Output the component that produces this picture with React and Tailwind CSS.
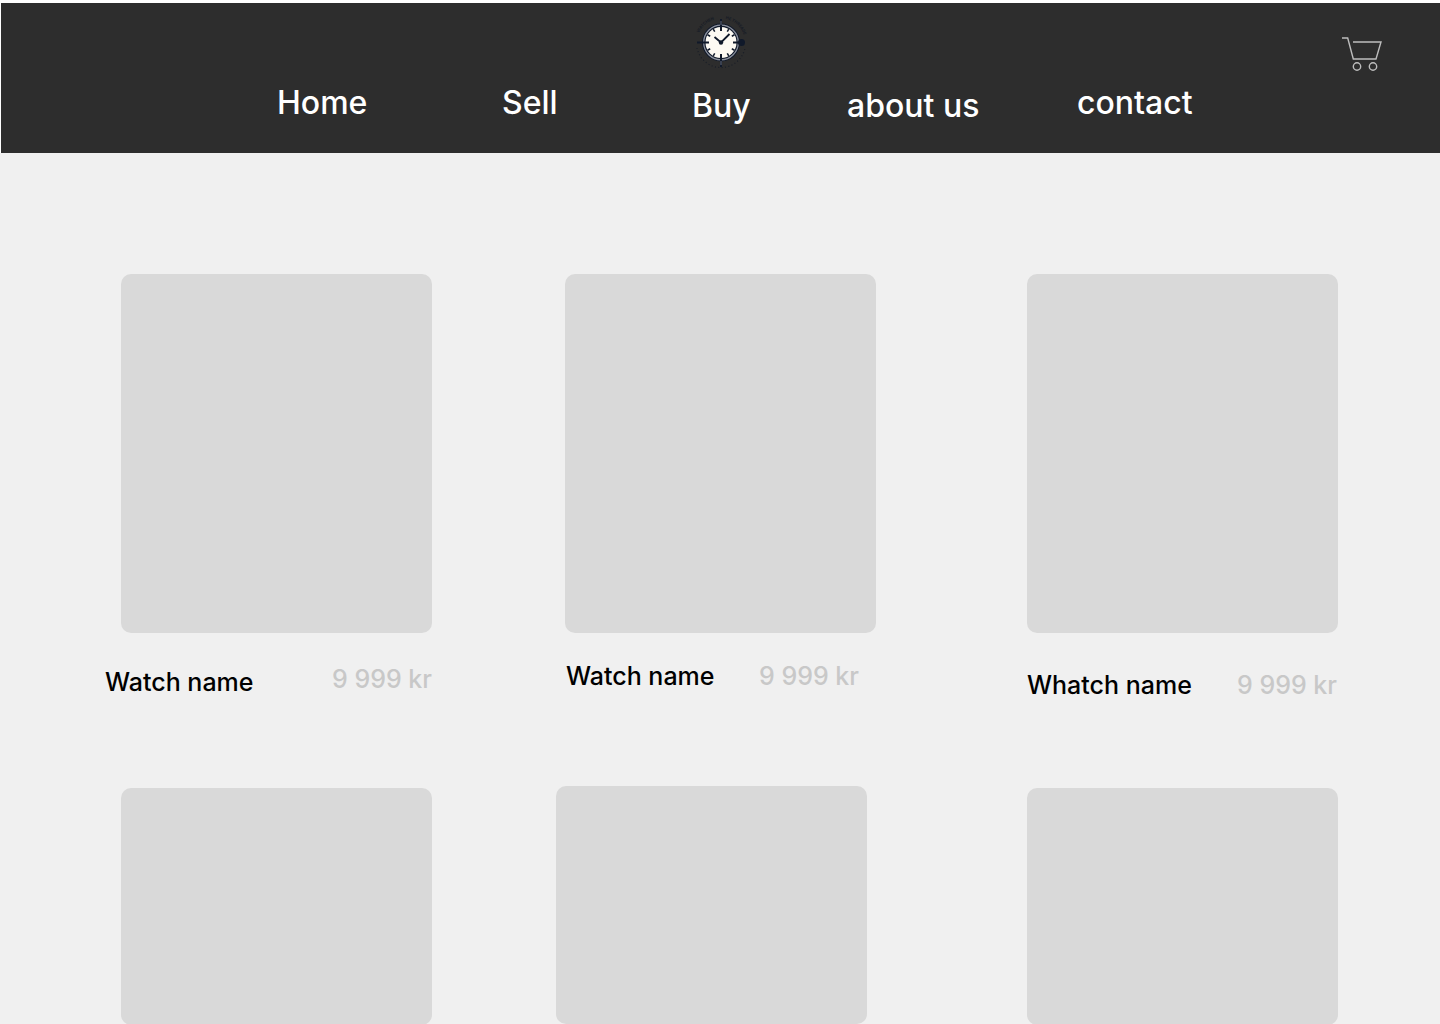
const hours = [30, 60, 120, 150, 210, 240, 300, 330];

function Logo() {
  return (
    <svg viewBox="0 0 72 72" className="size-18" role="img" aria-label="Watch shop logo">
      <defs>
        <path id="logo-arc" d="M12 37.500a24 24 0 0 1 48 0" />
      </defs>
      <g fill="#161b25" fontFamily="Inter, sans-serif" fontSize="4" fontWeight="700">
        <text>
          <textPath href="#logo-arc" startOffset="10">WATCHEN</textPath>
        </text>
        <text>
          <textPath href="#logo-arc" startOffset="42">HE THREADE</textPath>
        </text>
      </g>
      <path d="M12 43a24.500 24.500 0 0 0 48 0" fill="none" stroke="#181d27" strokeWidth="1.200" strokeDasharray="1 2.400" />
      <circle cx="36" cy="37.500" r="19" fill="#10192a" />
      <circle cx="36" cy="37.500" r="17.300" fill="none" stroke="#8b909c" strokeWidth="1.300" />
      <circle cx="36" cy="37.500" r="15.500" fill="#fdfaf3" />
      <g stroke="#10192a" strokeWidth="1.500">
        {hours.map((angle) => (
          <path key={angle} d="M36 22v3" transform={`rotate(${angle} 36 37.5)`} />
        ))}
      </g>
      <path d="M36 14v12M36 49v13M12 37.500h12M48 37.500h11" stroke="#10192a" strokeWidth="2" />
      <path d="M36 16v4M36 56v4" stroke="#646b79" strokeWidth="1" />
      <path d="M29.500 32l6.500 5.500 8.500-8.500" fill="none" stroke="#10192a" strokeWidth="1.800" />
      <circle cx="36" cy="37.500" r="2.200" fill="#10192a" />
      <circle cx="56.500" cy="37.500" r="3.500" fill="#10192a" />
    </svg>
  );
}

function Cart() {
  return (
    <svg viewBox="0 0 40 34" className="h-[34px] w-10" fill="none" stroke="#bdbdbd" strokeWidth="1.400" aria-hidden="true">
      <path d="M0 1h5.700L11.300 22H34l5-17H11" />
      <circle cx="15" cy="29.500" r="3.700" />
      <circle cx="31" cy="29.500" r="3.700" />
    </svg>
  );
}

const links = [
  { label: "Home", className: "" },
  { label: "Sell", className: "" },
  { label: "Buy", className: "pt-[3px]" },
  { label: "about us", className: "pt-[3px]" },
  { label: "contact", className: "" },
];

const watches = [
  { name: "Watch name", image: "ml-4", caption: "pt-[31px] w-[327px]", nameClass: "pt-[3px]" },
  { name: "Watch name", image: "", caption: "pt-7 pl-px w-[294px]", nameClass: "" },
  { name: "Whatch name", image: "", caption: "pt-[37px] w-[310px]", nameClass: "" },
];

export default function App() {
  return (
    <div className="min-h-screen bg-[#f0f0f0] font-['Inter',sans-serif] font-medium">
      <header className="border-t-[3px] border-l border-white bg-[#2d2d2d] pb-[23px]">
        <div className="grid grid-cols-[1fr_auto_1fr] items-start pt-0.5 pr-[58px]">
          <a href="#home" className="col-start-2 ml-[58px]">
            <Logo />
          </a>
          <button type="button" aria-label="Shopping cart" className="mt-8 justify-self-end">
            <Cart />
          </button>
        </div>
        <nav className="mt-0.5 grid grid-cols-[225fr_190fr_155fr_230fr_363fr] items-start pl-[276px] text-[32px] leading-12 text-white">
          {links.map(({ label, className }) => (
            <a key={label} href="#" className={`whitespace-nowrap ${className}`}>
              {label}
            </a>
          ))}
        </nav>
      </header>
      <main className="pt-[121px]">
        <section className="grid grid-cols-[460fr_462fr_311fr] pr-[102px] pl-[105px]">
          {watches.map((watch, i) => (
            <article key={i}>
              <div className={`h-[359px] w-[311px] rounded-[10px] bg-[#d9d9d9] ${watch.image}`} />
              <div className={`flex items-start justify-between text-[25px] leading-[30px] whitespace-nowrap ${watch.caption}`}>
                <h2 className={`text-black ${watch.nameClass}`}>{watch.name}</h2>
                <p className="text-[#c8c8c8]">9 999 kr</p>
              </div>
            </article>
          ))}
        </section>
        <section className="grid grid-cols-[435fr_471fr_311fr] items-end pt-[86px] pr-[102px] pl-[121px]">
          <div className="h-[237px] w-[311px] rounded-[10px] bg-[#d9d9d9]" />
          <div className="mb-px h-[238px] w-[311px] rounded-[10px] bg-[#d9d9d9]" />
          <div className="h-[237px] w-[311px] rounded-[10px] bg-[#d9d9d9]" />
        </section>
      </main>
    </div>
  );
}
